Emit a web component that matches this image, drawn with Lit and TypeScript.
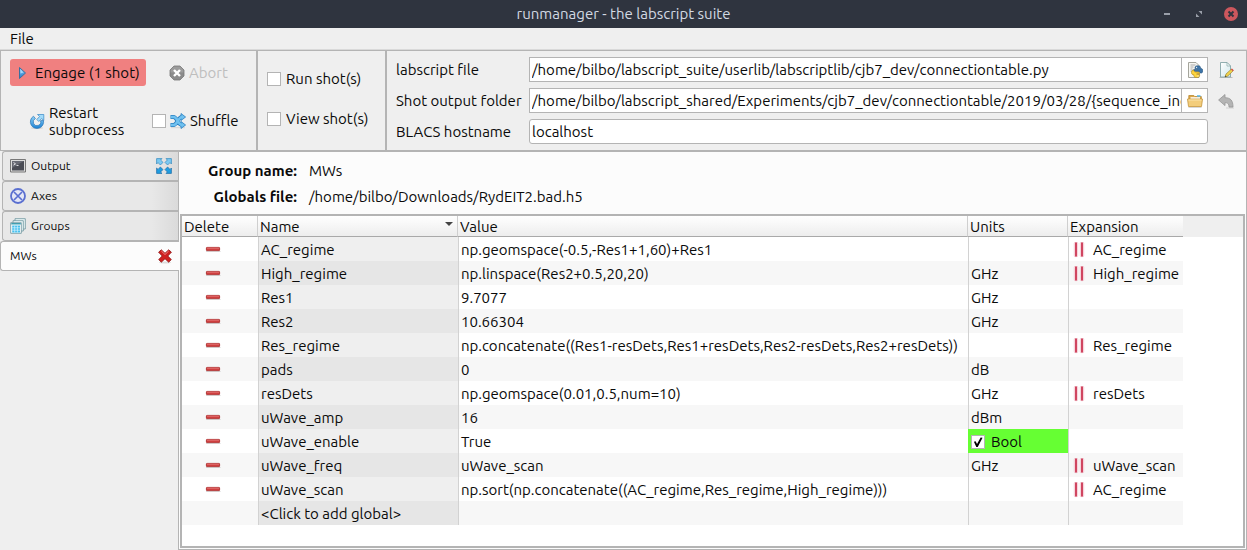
import { LitElement, html, css, svg, nothing } from "lit";
import { customElement, property } from "lit/decorators.js";

interface Row {
  name: string;
  value: string;
  units: string;
  expansion: string;
  bool?: boolean;
}

const rows: Row[] = [
  { name: "AC_regime", value: "np.geomspace(-0.5,-Res1+1,60)+Res1", units: "", expansion: "AC_regime" },
  { name: "High_regime", value: "np.linspace(Res2+0.5,20,20)", units: "GHz", expansion: "High_regime" },
  { name: "Res1", value: "9.7077", units: "GHz", expansion: "" },
  { name: "Res2", value: "10.66304", units: "GHz", expansion: "" },
  {
    name: "Res_regime",
    value: "np.concatenate((Res1-resDets,Res1+resDets,Res2-resDets,Res2+resDets))",
    units: "",
    expansion: "Res_regime",
  },
  { name: "pads", value: "0", units: "dB", expansion: "" },
  { name: "resDets", value: "np.geomspace(0.01,0.5,num=10)", units: "GHz", expansion: "resDets" },
  { name: "uWave_amp", value: "16", units: "dBm", expansion: "" },
  { name: "uWave_enable", value: "True", units: "Bool", expansion: "", bool: true },
  { name: "uWave_freq", value: "uWave_scan", units: "GHz", expansion: "uWave_scan" },
  {
    name: "uWave_scan",
    value: "np.sort(np.concatenate((AC_regime,Res_regime,High_regime)))",
    units: "",
    expansion: "AC_regime",
  },
];

const icons: Record<string, unknown> = {
  play: svg`<defs><linearGradient id="g" x1="0" y1="0" x2="0" y2="1"><stop offset="0" stop-color="#8fd0f8"/><stop offset="1" stop-color="#1f78c8"/></linearGradient></defs>
    <path d="M5.500 2.500v11l6-5.500z" fill="url(#g)" stroke="#3a6f9f" stroke-linejoin="round"/><path d="M6.500 4.500v4l3-1z" fill="#c4e8ff" opacity=".7"/>`,
  abort: svg`<path d="M5 1h6l4 4v6l-4 4H5l-4-4V5z" fill="#8b8b8b" stroke="#777" stroke-width=".8"/><path d="M5 1.600h6l3.400 3.400v2.500H1.600V5z" fill="#a9a9a9" opacity=".6"/>
    <path d="M5 5l6 6M11 5l-6 6" stroke="#fff" stroke-width="2.400"/>`,
  restart: svg`<defs><linearGradient id="g" x1="0" y1="0" x2="0" y2="1"><stop offset="0" stop-color="#8fd2f8"/><stop offset="1" stop-color="#1c82d4"/></linearGradient></defs>
    <ellipse cx="8" cy="15" rx="6" ry="1" fill="#000" opacity=".12"/>
    <path d="M4.500 3.200A6.600 6.600 0 1 0 14.400 7.200l-2.900.6A3.700 3.700 0 1 1 6.400 5.600z" fill="url(#g)" stroke="#2a74b4" stroke-width=".7" stroke-linejoin="round"/>
    <path d="M8.500 1.500h6.300v6l-2.200-2-2.800 3-2-2 2.800-3z" fill="#a4dcfa" stroke="#3587c5" stroke-width=".7" stroke-linejoin="round"/>`,
  shuffle: svg`<path d="M1 14.700h14" stroke="#000" opacity=".1"/><g fill="none" stroke="#2a7fc0" stroke-width="4"><path d="M.5 4h3c3.500 0 4.500 8 8.500 8M.5 12h3c3.500 0 4.500-8 8.500-8"/></g>
    <path d="M11 .5l4.600 3.500L11 7.500zM11 8.500l4.600 3.500-4.600 3.500z" fill="#6fc1f0" stroke="#2a7fc0" stroke-width=".8"/>
    <g fill="none" stroke="#6fc1f0" stroke-width="2.600"><path d="M.8 4h3c3.500 0 4.500 8 8.200 8M.8 12h3c3.500 0 4.500-8 8.200-8"/></g>`,
  python: svg`<path d="M1.500.5h7.500l3 3v12H1.500z" fill="#f6f6f2" stroke="#a5a59c"/><path d="M3.500 3h5M3.500 5h3M3.500 7h2M3.500 9h1.500" stroke="#999" stroke-width=".8"/>
    <path d="M8 5.600C8 4.300 9.200 3.800 10.800 3.800s2.800.6 2.800 1.900v.9h.9c1.700 0 1.700 4.400 0 4.400h-1.300c-.2-1-.8-1.600-1.900-1.600H8.200C7.200 9.400 6.700 8.700 6.700 7.500h3.800v-.7H8z" fill="#3c74a8" stroke="#28567f" stroke-width=".6"/>
    <path d="M12.600 12.400v1.200c0 1.300-1.300 1.900-2.900 1.900s-2.900-.6-2.900-1.900v-.9h-.9c-1.800 0-1.800-4.600 0-4.600h.8c.2 1.300.8 1.900 1.900 1.900H11c1 0 1.600.7 1.600 1.700H9.800v.7z" fill="#ffd53e" stroke="#a97f10" stroke-width=".6"/>
    <circle cx="9.600" cy="5.300" r=".6" fill="#fff"/><circle cx="11" cy="14" r=".6" fill="#fff"/>`,
  folder: svg`<path d="M1.800 2.500h5l1 1h6.500v5H1.800z" fill="#dca648" stroke="#b9892f" stroke-width=".8"/><path d="M3.500 4.200h9.500v4H3.500z" fill="#fff"/><path d="M10 3h3.500" stroke="#55b5e8" stroke-width="1.500"/>
    <path d="M.5 6h15l-1 7.500h-13z" fill="#f3cd7b" stroke="#c4943b" stroke-width=".8"/><path d="M1.500 7h13" stroke="#fbe5b0"/><path d="M1.500 14.500h13" stroke="#000" opacity=".15"/>`,
  edit: svg`<defs><linearGradient id="g" x1="0" y1="0" x2="1" y2="1"><stop offset="0" stop-color="#fff"/><stop offset="1" stop-color="#cfe8ec"/></linearGradient></defs>
    <path d="M1.500 15.500h13" stroke="#000" opacity=".2"/>
    <path d="M2.500.5h6.500l3.500 3.500v11h-10z" fill="url(#g)" stroke="#86a6a8" stroke-width=".9"/><path d="M9 .5V4h3.500z" fill="#f8ffff" stroke="#86a6a8" stroke-width=".7"/>
    <path d="M7 15l1-3 5.500-5 1.700 1.800-5.400 5.200z" fill="#f1d34c" stroke="#8f7a26" stroke-width=".6"/><path d="M13 7.500l1-1 1.800 1.700-1 1z" fill="#d8504c"/><path d="M7 15l.5-1.400 1 .8z" fill="#333"/>`,
  undo: svg`<path d="M7 1.500v3.200c5.500 0 8 2.800 8 9.300h-4c0-3-.8-4.400-4-4.400v3L.6 7z" fill="#b4b4b4" stroke="#959595" stroke-width=".8" stroke-linejoin="round"/><path d="M8 15h8" stroke="#000" opacity=".12"/>`,
  terminal: svg`<path d="M.5 1.500h15v12.500H.5z" fill="#dcdcdc" stroke="#777"/><path d="M2 3h12v9.500H2z" fill="#4a4c55"/><path d="M2 3h12L2 10z" fill="#686a74"/><path d="M3.500 4.500l2 1.300-2 1.300M6.500 7.500h2" fill="none" stroke="#fff" stroke-width=".8"/>`,
  axes: svg`<circle cx="8" cy="8" r="7" fill="#e4e7f6" stroke="#5a6fd0" stroke-width="1.800"/><path d="M4 4l8 8M12 4l-8 8" stroke="#5a6fd0" stroke-width="1.700"/>`,
  groups: svg`<path d="M5 .7h10.300v10.300H5z" fill="#eef8fa" stroke="#68909a" stroke-width=".8"/><path d="M3 2.700h10.300V13H3z" fill="#eef8fa" stroke="#68909a" stroke-width=".8"/>
    <path d="M.7 4.700H11.300v10.600H.7z" fill="#fff" stroke="#68909a" stroke-width=".8"/><path d="M1.300 5h9.500v1.500H1.300z" fill="#3f9eb0"/><path d="M2.200 7.500h7.800v7H2.200z" fill="#45c0ee"/><path d="M4.700 7.500v7M7.400 7.500v7M2.200 9.800H10M2.200 12.200H10" stroke="#d8f4ff" stroke-width=".7"/>`,
  expand: svg`<g stroke="#2f86bd" stroke-width=".7" fill="#7cc9f2"><path d="M.6.600H6L4.600 2 7 4.400 4.400 7 2 4.600.6 6z"/><path d="M15.400.600H10L11.400 2 9 4.400 11.600 7 14 4.600 15.400 6z"/></g>
    <g stroke="#1c6ba6" stroke-width=".7" fill="#1f9ce0"><path d="M.6 15.400H6L4.600 14 7 11.600 4.400 9 2 11.400.6 10z"/><path d="M15.400 15.400H10l1.400-1.400L9 11.600 11.600 9l2.400 2.400 1.400-1.400z"/></g>`,
  close: svg`<ellipse cx="8" cy="14.500" rx="6" ry="1" fill="#000" opacity=".12"/><path d="M4.300 1.800L8 5.300l3.700-3.500 2.700 2.400L10.800 8l3.500 3.600-2.600 2.600L8 10.700l-3.700 3.500-2.600-2.600L5.200 8 1.600 4.200z" fill="#cf2020" stroke="#8d1212" stroke-width=".8" stroke-linejoin="round"/><path d="M4.300 3L8 6.500 11.700 3" fill="none" stroke="#f08080"/>`,
  minus: svg`<path d="M1 9.500h14.500" stroke="#000" opacity=".15"/><rect x="1.400" y="5.400" width="13.200" height="3.200" rx=".5" fill="#cf3f3f" stroke="#a82626" stroke-width=".8"/><path d="M2 6.200h12" stroke="#e98080" stroke-width=".8"/>`,
  bars: svg`<g fill="#fff" stroke="#f0bcc6" stroke-width=".8"><rect x="3.300" y=".4" width="3.400" height="14.200" rx=".8"/><rect x="9.300" y=".4" width="3.400" height="14.200" rx=".8"/></g><path d="M5 .6v13.800M11 .6v13.800" stroke="#d04560" stroke-width="2"/>`,
};

@customElement("app-icon")
export class AppIcon extends LitElement {
  @property() name = "";
  static styles = css`
    :host { display: inline-flex; flex: none; width: 16px; height: 16px; }
    svg { width: 100%; height: 100%; }
  `;
  render() {
    return html`<svg viewBox="0 0 16 16" aria-hidden="true">${icons[this.name]}</svg>`;
  }
}

@customElement("app-root")
export class AppRoot extends LitElement {
  static styles = css`
    :host {
      display: flex;
      flex-direction: column;
      min-height: 100vh;
      background: #efefef;
      color: #0a0a0a;
      font: 15px/20px Ubuntu, "Noto Sans", sans-serif;
    }
    * { box-sizing: border-box; }
    button {
      display: inline-flex;
      align-items: center;
      padding: 0;
      border: 0;
      background: none;
      color: inherit;
      font: inherit;
      text-align: left;
    }
    input { color: inherit; font: inherit; margin: 0; }
    input[type="checkbox"] {
      appearance: none;
      display: grid;
      flex: none;
      width: 14px;
      height: 14px;
      border: 1px solid #b4b4b4;
      background: #fff;
    }
    input[type="checkbox"]:checked::before {
      content: "";
      background: #000;
      clip-path: polygon(16% 48%, 30% 44%, 42% 66%, 72% 12%, 88% 14%, 48% 92%, 36% 92%);
    }
    .titlebar {
      display: grid;
      grid-template-columns: 1fr auto 1fr;
      align-items: center;
      height: 28px;
      background: #2f343f;
      color: #d3dae3;
    }
    .title { grid-column: 2; margin: 0; font-size: 15px; font-weight: 400; }
    .window-buttons { display: flex; justify-content: flex-end; gap: 16px; padding-right: 8px; }
    .window-buttons svg { width: 16px; height: 16px; }
    .menubar { display: flex; height: 22px; padding: 0 10px; border-bottom: 1px solid #d9d9d9; }
    .toolbar { display: flex; }
    .panel { border: 1px solid #b4b4b4; }
    .actions {
      display: grid;
      grid-template-columns: 136px 1fr;
      grid-template-rows: 27px 1fr;
      gap: 12px 6px;
      width: 257px;
      padding: 8px 9px 6px;
    }
    .engage { gap: 5px; padding: 0 4px; border-radius: 3px; background: #f08080; white-space: nowrap; }
    .abort { gap: 4px; padding-left: 17px; color: #bebebe; }
    .restart { gap: 4px; padding-left: 19px; line-height: 17px; }
    .shuffle { display: flex; align-items: center; gap: 4px; }
    .options { display: flex; flex-direction: column; gap: 20px; width: 129px; padding: 18px 9px; }
    .option { display: flex; align-items: center; gap: 5px; white-space: nowrap; }
    .fields {
      display: grid;
      flex: 1;
      grid-template-columns: 127px 1fr 16px;
      grid-auto-rows: 25px;
      align-items: center;
      column-gap: 6px;
      row-gap: 6px;
      min-width: 0;
      padding: 6px 12px 6px 9px;
    }
    .fields label { white-space: nowrap; }
    .combo { display: flex; height: 25px; min-width: 0; margin-right: 4px; }
    .text { flex: 1; min-width: 0; height: 25px; padding: 0 2px; border: 1px solid #b4b4b4; background: #fff; }
    .path { padding-right: 0; }
    .host { border-radius: 3px; }
    .browse { justify-content: center; width: 26px; border: 1px solid #b4b4b4; border-left: 0; background: #fff; }
    .workspace { display: flex; flex: 1; }
    .tabs { display: flex; flex-direction: column; flex: none; width: 179px; border-right: 1px solid #b4b4b4; font-size: 12px; }
    .tab {
      display: flex;
      align-items: center;
      gap: 5px;
      height: 30px;
      margin-left: 2px;
      padding: 0 6px 0 7px;
      border: 1px solid #b4b4b4;
      border-right: 0;
      border-radius: 3px 0 0 3px;
      background: linear-gradient(90deg, #e8e8e8 85%, #dadada);
    }
    .tab button:first-child { flex: 1; gap: 5px; }
    .active { margin: 0 -1px 0 0; padding: 0 6px 0 9px; background: #fcfcfc; }
    .page {
      display: flex;
      flex: 1;
      flex-direction: column;
      min-width: 0;
      padding: 0 1px 1px;
      border: 1px solid #b4b4b4;
      border-left: 0;
      background: #fcfcfc;
    }
    .info { display: grid; grid-template-columns: 117px 1fr; gap: 6px 12px; margin: 0; padding: 9px 0 7px; }
    .info dt { font-weight: 700; text-align: right; }
    .info dd { margin: 0; }
    .frame { flex: 1; border: 2px solid #b4b4b4; background: linear-gradient(#efefef 21px, #fff 21px); }
    table { width: 1001px; table-layout: fixed; border-collapse: separate; border-spacing: 0; }
    .c-delete { width: 76px; }
    .c-name { width: 200px; }
    .c-value { width: 510px; }
    .c-units { width: 100px; }
    .c-expansion { width: 115px; }
    th {
      height: 21px;
      padding: 2px 2px 0;
      border-right: 1px solid #cfcfcf;
      border-bottom: 1px solid #a9a9a9;
      background: linear-gradient(#fff, #ededed);
      font-weight: 400;
      line-height: 18px;
      text-align: left;
    }
    th:last-child { border-right: 0; }
    .sort { display: flex; align-items: center; justify-content: space-between; width: 100%; padding-right: 2px; }
    .arrow { width: 8px; height: 4px; margin-bottom: 6px; background: #444; clip-path: polygon(0 0, 100% 0, 50% 100%); }
    td { height: 24px; padding: 2px 2px 0; border-left: 1px solid #d2d2d2; background: #fff; white-space: nowrap; }
    td:first-child { padding: 0 16px 0 2px; border-left: 0; text-align: center; }
    tr:nth-child(even) td { background: #f7f7f7; }
    td.name, tr:nth-child(odd) td.name { background: #efefef; }
    tr:nth-child(even) td.name { background: #e6e6e6; }
    tr td.bool, tr:nth-child(odd) td.bool { background: #66ff33; border-left-color: #66ff33; }
    .remove { vertical-align: middle; }
    .cell { display: flex; align-items: center; gap: 6px; }
  `;

  private tab(label: string, icon: string, action = "", actionLabel = "", active = false) {
    return html`<div class="tab ${active ? "active" : ""}">
      <button>${icon ? html`<app-icon name=${icon}></app-icon>` : nothing}${label}</button>
      ${action ? html`<button aria-label=${actionLabel}><app-icon name=${action}></app-icon></button>` : nothing}
    </div>`;
  }

  render() {
    return html`
      <header class="titlebar">
        <h1 class="title">runmanager - the labscript suite</h1>
        <div class="window-buttons">
          <button aria-label="Minimize"><svg viewBox="0 0 16 16"><path d="M5 7h6v2H5z" fill="#9a9fa9" /></svg></button>
          <button aria-label="Maximize"><svg viewBox="0 0 16 16"><path d="M7.500 5H11v3.500zM5 7.500V11h3.500z" fill="#9a9fa9" /></svg></button>
          <button aria-label="Close">
            <svg viewBox="0 0 16 16"><circle cx="8" cy="8" r="7" fill="#cc575d" /><path d="M5.500 5.500l5 5M10.500 5.500l-5 5" stroke="#2f343f" stroke-width="2" /></svg>
          </button>
        </div>
      </header>
      <nav class="menubar"><button>File</button></nav>
      <section class="toolbar">
        <div class="panel actions">
          <button class="engage"><app-icon name="play"></app-icon>Engage (1 shot)</button>
          <button class="abort" disabled><app-icon name="abort"></app-icon>Abort</button>
          <button class="restart"><app-icon name="restart"></app-icon><span>Restart<br />subprocess</span></button>
          <label class="shuffle"><input type="checkbox" /><app-icon name="shuffle"></app-icon>Shuffle</label>
        </div>
        <div class="panel options">
          <label class="option"><input type="checkbox" />Run shot(s)</label>
          <label class="option"><input type="checkbox" />View shot(s)</label>
        </div>
        <div class="panel fields">
          <label for="script">labscript file</label>
          <div class="combo">
            <input id="script" class="text path" .value=${"/home/bilbo/labscript_suite/userlib/labscriptlib/cjb7_dev/connectiontable.py"} />
            <button class="browse" aria-label="Select labscript file"><app-icon name="python"></app-icon></button>
          </div>
          <button aria-label="Edit labscript file"><app-icon name="edit"></app-icon></button>
          <label for="folder">Shot output folder</label>
          <div class="combo">
            <input id="folder" class="text path" .value=${"/home/bilbo/labscript_shared/Experiments/cjb7_dev/connectiontable/2019/03/28/{sequence_index}"} />
            <button class="browse" aria-label="Select output folder"><app-icon name="folder"></app-icon></button>
          </div>
          <button aria-label="Reset output folder" disabled><app-icon name="undo"></app-icon></button>
          <label for="host">BLACS hostname</label>
          <div class="combo"><input id="host" class="text host" .value=${"localhost"} /></div>
        </div>
      </section>
      <main class="workspace">
        <nav class="tabs">
          ${this.tab("Output", "terminal", "expand", "Pop out")}
          ${this.tab("Axes", "axes")}
          ${this.tab("Groups", "groups")}
          ${this.tab("MWs", "", "close", "Close group", true)}
        </nav>
        <section class="page">
          <dl class="info">
            <dt>Group name:</dt><dd>MWs</dd>
            <dt>Globals file:</dt><dd>/home/bilbo/Downloads/RydEIT2.bad.h5</dd>
          </dl>
          <div class="frame">
            <table>
              <colgroup>
                <col class="c-delete" /><col class="c-name" /><col class="c-value" /><col class="c-units" /><col class="c-expansion" />
              </colgroup>
              <thead>
                <tr>
                  <th>Delete</th>
                  <th aria-sort="ascending"><button class="sort">Name<span class="arrow"></span></button></th>
                  <th>Value</th><th>Units</th><th>Expansion</th>
                </tr>
              </thead>
              <tbody>
                ${rows.map(
                  (r) => html`<tr>
                    <td><button class="remove" aria-label="Delete ${r.name}"><app-icon name="minus"></app-icon></button></td>
                    <td class="name">${r.name}</td>
                    <td>${r.value}</td>
                    <td class=${r.bool ? "bool" : ""}>
                      ${r.bool ? html`<label class="cell"><input type="checkbox" checked />${r.units}</label>` : r.units}
                    </td>
                    <td>${r.expansion ? html`<div class="cell"><app-icon name="bars"></app-icon>${r.expansion}</div>` : nothing}</td>
                  </tr>`
                )}
                <tr><td></td><td class="name">&lt;Click to add global&gt;</td><td></td><td></td><td></td></tr>
              </tbody>
            </table>
          </div>
        </section>
      </main>
    `;
  }
}
